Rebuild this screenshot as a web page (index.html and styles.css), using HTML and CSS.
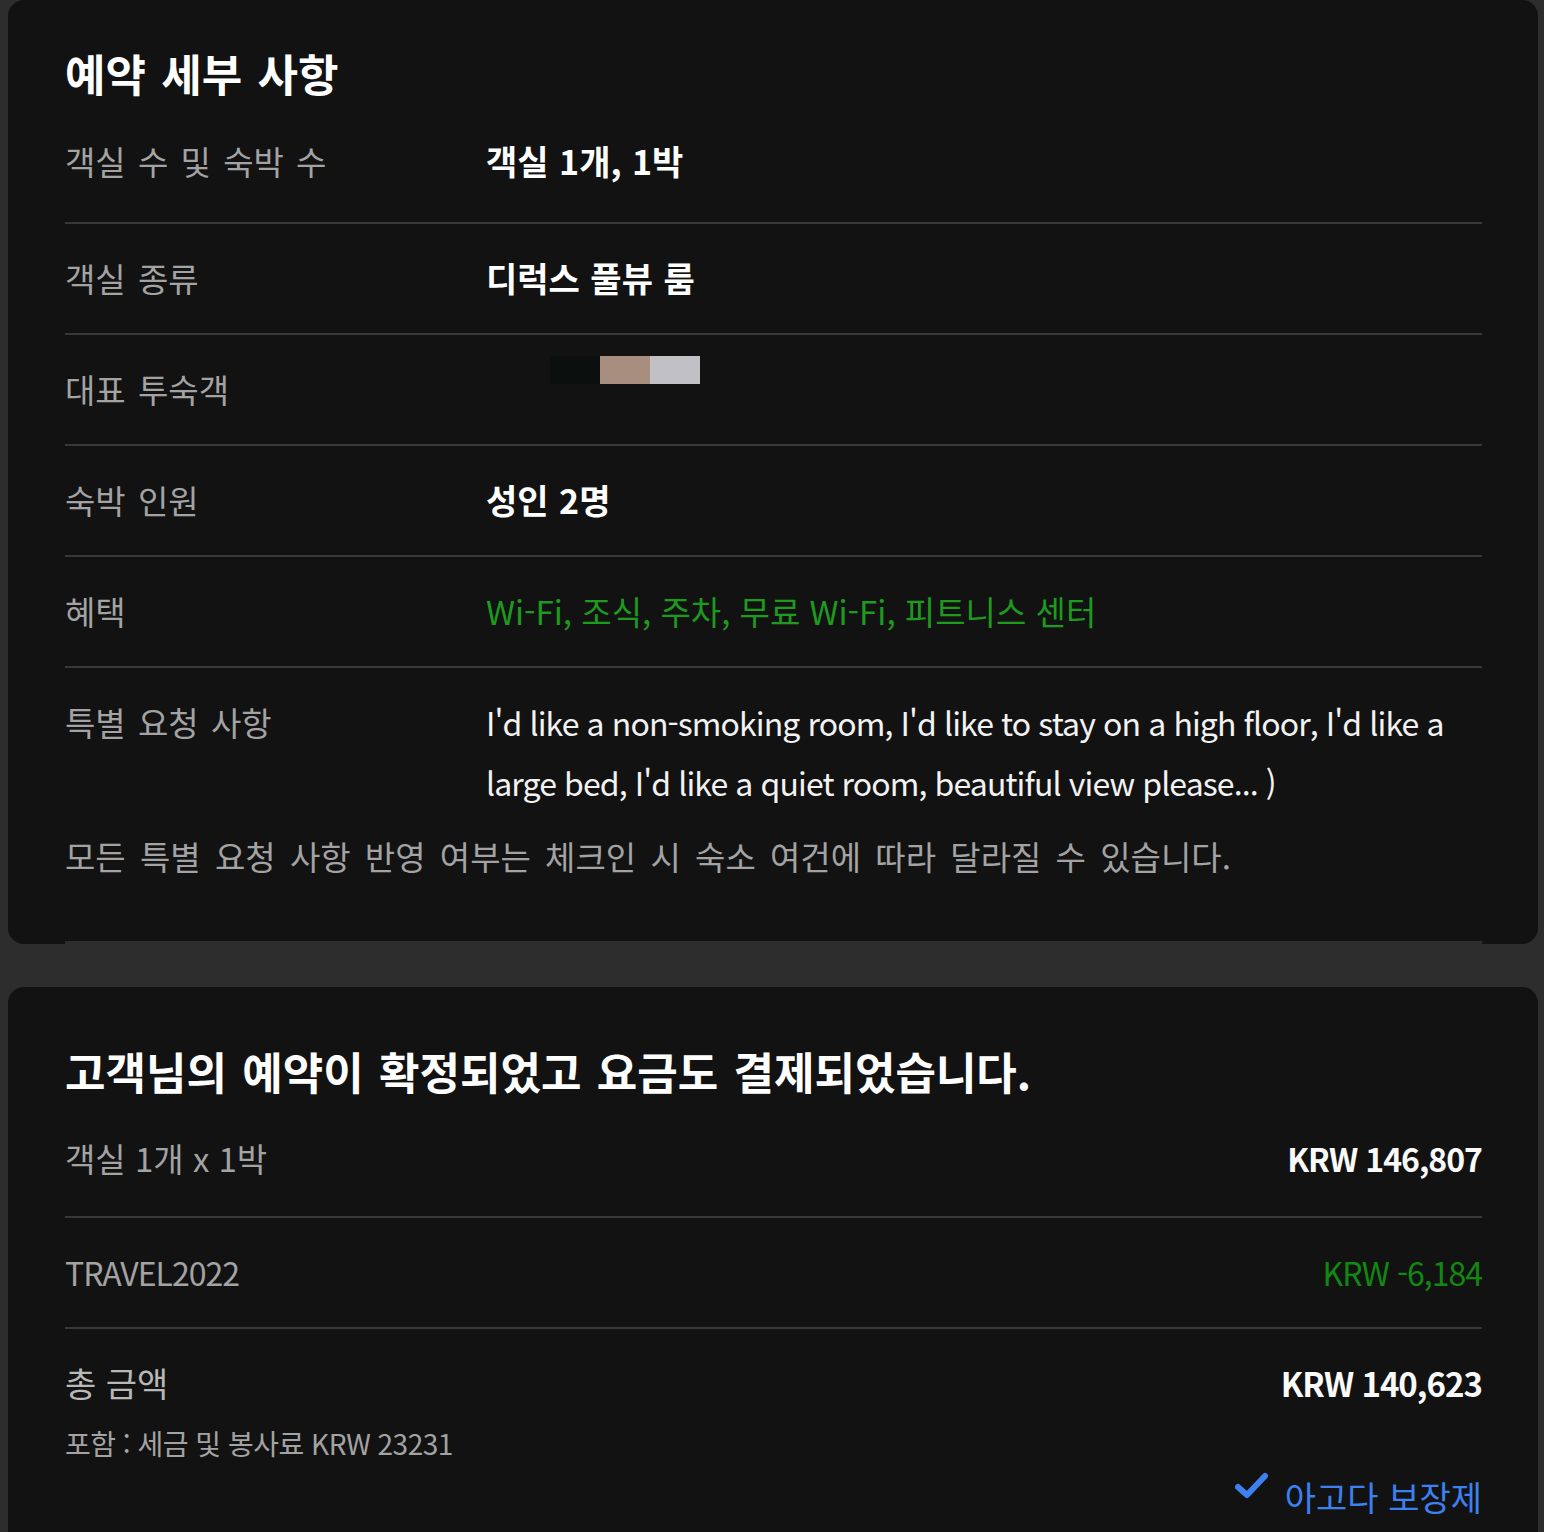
FILE: index.html
```html
<!DOCTYPE html>
<html lang="ko">
<head>
<meta charset="utf-8">
<title>예약 세부 사항</title>
<link rel="stylesheet" href="styles.css">
</head>
<body>

<div class="card details">
	<h2 class="card-title">예약 세부 사항</h2>

	<div class="row">
		<div class="label">객실 수 및 숙박 수</div>
		<div class="value strong">객실 1개, 1박</div>
	</div>
	<div class="row">
		<div class="label">객실 종류</div>
		<div class="value strong">디럭스 풀뷰 룸</div>
	</div>
	<div class="row">
		<div class="label">대표 투숙객</div>
		<div class="value">
			<span class="masked"><i class="px px-dark"></i><i class="px px-tan"></i><i class="px px-grey"></i></span>
		</div>
	</div>
	<div class="row">
		<div class="label">숙박 인원</div>
		<div class="value strong">성인 2명</div>
	</div>
	<div class="row">
		<div class="label">혜택</div>
		<div class="value perks">Wi-Fi, 조식, 주차, 무료 Wi-Fi, 피트니스 센터</div>
	</div>
	<div class="row row-open">
		<div class="label">특별 요청 사항</div>
		<div class="value request">I'd like a non-smoking room, I'd like to stay on a high floor, I'd like a large bed, I'd like a quiet room, beautiful view please... )</div>
	</div>
	<p class="note">모든 특별 요청 사항 반영 여부는 체크인 시 숙소 여건에 따라 달라질 수 있습니다.</p>

	<div class="card-rule"></div>
</div>

<div class="card payment">
	<h2 class="card-title">고객님의 예약이 확정되었고 요금도 결제되었습니다.</h2>

	<div class="row price-row">
		<div class="label">객실 1개 x 1박</div>
		<div class="amount">KRW 146,807</div>
	</div>
	<div class="row price-row">
		<div class="label code">TRAVEL2022</div>
		<div class="amount discount">KRW -6,184</div>
	</div>
	<div class="total">
		<div class="total-line">
			<div class="total-label">총 금액</div>
			<div class="amount grand">KRW 140,623</div>
		</div>
		<div class="tax">포함 : 세금 및 봉사료 KRW 23231</div>
		<div class="guarantee">
			<svg class="check" width="34" height="30" viewBox="0 0 34 30"><path d="M3 15 L12 23 L30 4" fill="none" stroke="#3d80f0" stroke-width="6" stroke-linecap="round" stroke-linejoin="round"/></svg>
			<span>아고다 보장제</span>
		</div>
	</div>
</div>

</body>
</html>
```

FILE: styles.css
```css
body {
	margin: 0;
	background: #2d2d2d;
	font-family: "Noto Sans CJK KR", sans-serif;
	color: #fff;
}

.card {
	background: #121212;
	margin: 0 6px 0 8px;
	padding: 0 56px 0 57px;
	border-radius: 16px;
}

.details {
	padding-top: 42px;
}

.payment {
	margin-top: 43px;
	padding-top: 53px;
	padding-bottom: 20px;
}

.card-title {
	margin: 0;
	font-size: 44px;
	font-weight: 700;
	line-height: 62px;
	word-spacing: 3px;
}

.row {
	display: flex;
	align-items: flex-start;
	padding: 24px 0 25px;
	line-height: 60px;
	border-bottom: 2px solid #383838;
	font-size: 32px;
}

.details .row:first-of-type {
	padding-top: 27px;
	padding-bottom: 31px;
}

.row-open {
	border-bottom: none;
	padding-bottom: 0;
}

.label {
	width: 421px;
	flex-shrink: 0;
	color: #a3a3a3;
	font-size: 33px;
	word-spacing: 3px;
}

.value {
	flex: 1;
	font-size: 34px;
}

.value.strong {
	font-weight: 700;
	word-spacing: 1px;
}

.perks {
	color: #1e9a1e;
	font-size: 33px;
}

.request {
	font-size: 32px;
	color: #f2f2f2;
	letter-spacing: -0.9px;
}

.masked {
	display: inline-flex;
	margin-left: 64px;
	vertical-align: top;
	margin-top: -3px;
}

.px {
	display: block;
	width: 50px;
	height: 28px;
}

.px-dark { background: #0b0f0d; }
.px-tan { background: #a88e7f; }
.px-grey { background: #c1c0c4; }

.note {
	margin: 14px 0 0;
	line-height: 60px;
	color: #a3a3a3;
	font-size: 33px;
	word-spacing: 5px;
}

.card-rule {
	margin-top: 55px;
	height: 3px;
	background: #2d2d2d;
}

.price-row {
	justify-content: space-between;
}

.payment .price-row:first-of-type {
	padding-top: 26px;
	padding-bottom: 28px;
}

.price-row .label {
	font-size: 33px;
	word-spacing: 0;
}

.price-row .code {
	font-size: 32px;
	letter-spacing: -1px;
}

.amount {
	font-size: 32px;
	font-weight: 700;
	letter-spacing: -1px;
	color: #fafafa;
}

.discount {
	font-weight: 400;
	color: #118811;
}

.grand {
	font-size: 33px;
}

.total {
	padding-top: 24px;
}

.total-line {
	display: flex;
	justify-content: space-between;
	line-height: 60px;
}

.total-label {
	font-size: 34px;
	color: #b8b8b8;
}

.tax {
	margin-top: 10px;
	line-height: 40px;
	font-size: 28px;
	letter-spacing: -0.5px;
	color: #a3a3a3;
}

.guarantee {
	display: flex;
	justify-content: flex-end;
	align-items: center;
	gap: 16px;
	margin-top: 4px;
	font-size: 34px;
	color: #3d80f0;
	line-height: 60px;
}

.check {
	margin-top: -20px;
}
```
